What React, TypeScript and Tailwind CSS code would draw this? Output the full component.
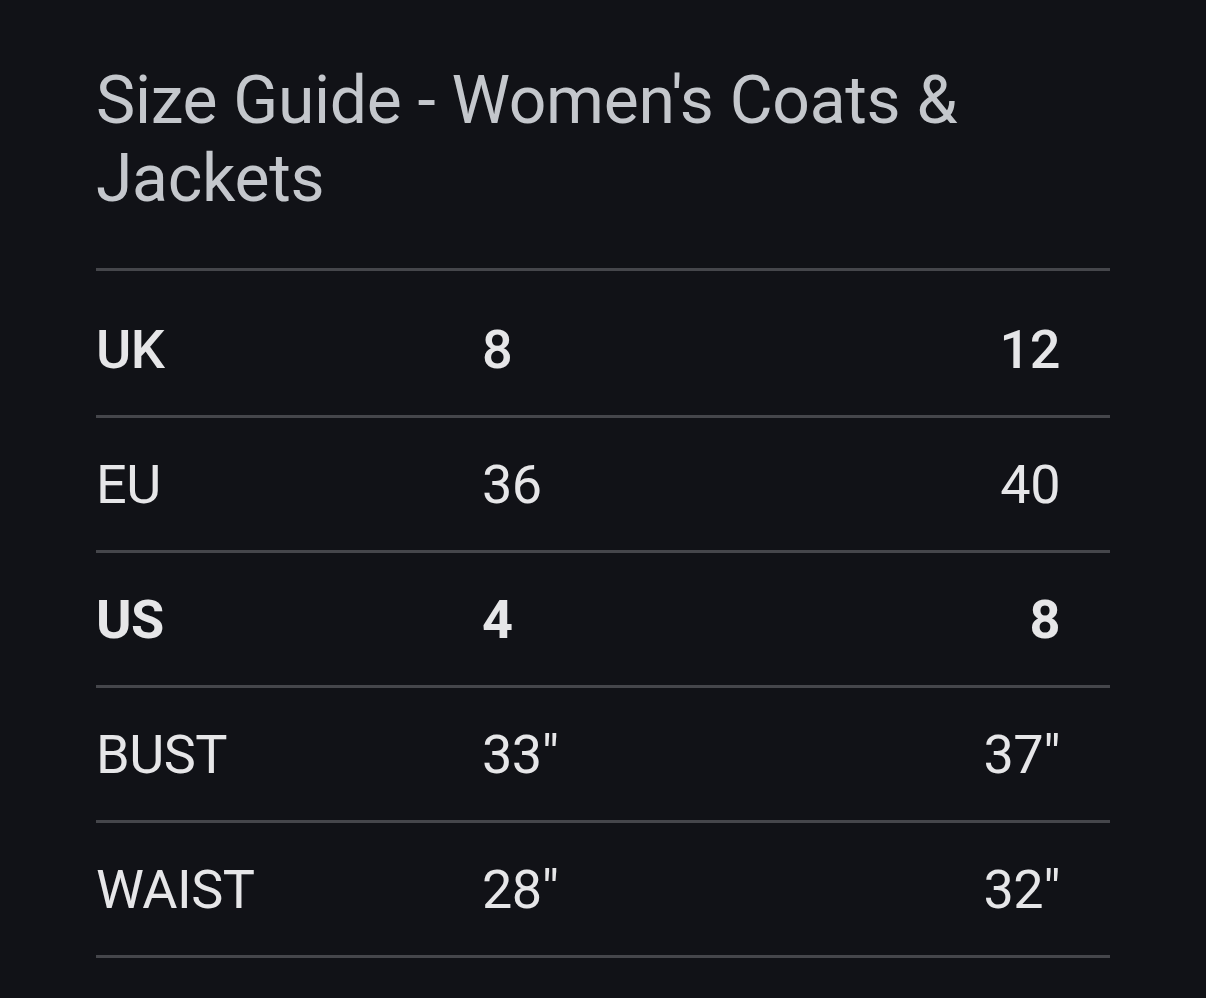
import React from 'react'

const rows = [
  { label: 'UK', a: '8', b: '12', weight: 'font-medium' },
  { label: 'EU', a: '36', b: '40', weight: 'font-normal' },
  { label: 'US', a: '4', b: '8', weight: 'font-bold' },
  { label: 'BUST', a: '33"', b: '37"', weight: 'font-normal' },
  { label: 'WAIST', a: '28"', b: '32"', weight: 'font-normal' },
]

export default function App() {
  return (
    <div
      className="min-h-[998px] w-full bg-[#111217] px-[96px] pt-[62px]"
      style={{ fontFamily: 'Roboto, "Open Sans", sans-serif' }}
    >
      <h1 className="text-[66px] leading-[78px] font-normal text-[#c4c7cc] tracking-[-0.3px]">
        Size Guide - Women's Coats &amp;
        <br />
        Jackets
      </h1>

      <div className="mt-[50px] border-t-[3px] border-[#45464b] pt-[12px]">
        {rows.map((r) => (
          <div
            key={r.label}
            className={`flex h-[135px] items-center border-b-[3px] border-[#45464b] text-[54px] tracking-[-0.5px] text-[#e6e6e8] ${r.weight}`}
          >
            <div className="w-[386px]">{r.label}</div>
            <div className="flex-1">{r.a}</div>
            <div className="pr-[50px] text-right">{r.b}</div>
          </div>
        ))}
      </div>
    </div>
  )
}
